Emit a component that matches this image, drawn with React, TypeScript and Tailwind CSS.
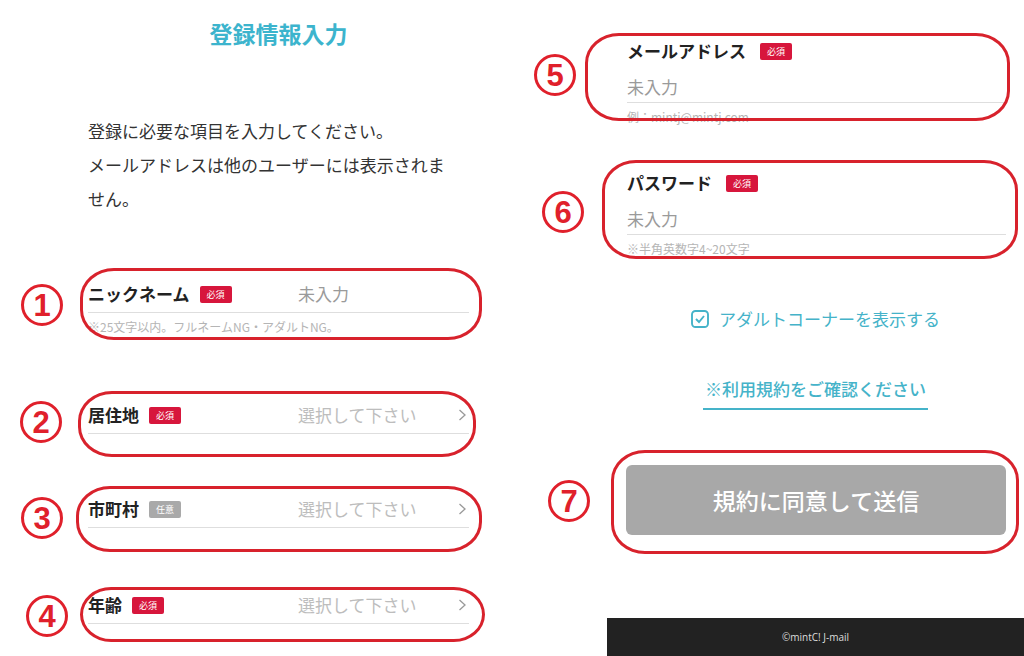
import React from 'react';

const JP = "font-['Noto_Sans_CJK_JP','Noto_Sans',sans-serif]";

const Badge: React.FC<{ label: string; gray?: boolean }> = ({ label, gray }) => (
  <span
    className={`inline-flex items-center justify-center w-[32px] h-[17px] rounded-[2px] text-[9px] leading-none text-white ${
      gray ? 'bg-[#a9a9a9]' : 'bg-[#d7163c]'
    }`}
  >
    {label}
  </span>
);

const Chevron = () => (
  <svg width="9" height="14" viewBox="0 0 9 14" className="ml-auto mr-[2px]">
    <polyline points="1.5,2 7,7 1.5,12" fill="none" stroke="#999" strokeWidth="1.3" />
  </svg>
);

// left screen: inline row (label + badge, value at fixed column)
const InlineRow: React.FC<{
  label: string;
  badge: string;
  gray?: boolean;
  value: string;
  select?: boolean;
  className?: string;
  hint?: string;
}> = ({ label, badge, gray, value, select, className, hint }) => (
  <div className={className}>
    <div className="flex items-center h-[24px]">
      <div className="flex items-center w-[210px] shrink-0">
        <span className="text-[17px] font-bold text-[#222] leading-[24px] mr-[10px]">{label}</span>
        <Badge label={badge} gray={gray} />
      </div>
      <span className={`text-[17px] leading-[24px] ${select ? 'text-[#bdbdbd]' : 'text-[#9a9a9a]'}`}>{value}</span>
      {select && <Chevron />}
    </div>
    <div className="h-[7px] border-b border-[#dedede]" />
    {hint && <p className="mt-[6px] text-[12px] leading-[16px] text-[#b5b5b5]">{hint}</p>}
  </div>
);

// right screen: stacked row (label on top, input below)
const StackRow: React.FC<{ label: string; hint: string; className?: string }> = ({ label, hint, className }) => (
  <div className={className}>
    <div className="flex items-center h-[24px]">
      <span className="text-[17px] font-bold text-[#222] leading-[24px] mr-[14px]">{label}</span>
      <Badge label="必須" />
    </div>
    <div className="mt-[12px] pb-[3px] border-b border-[#dedede]">
      <span className="text-[17px] leading-[24px] text-[#9a9a9a]">未入力</span>
    </div>
    <p className="mt-[6px] text-[12px] leading-[16px] text-[#b5b5b5]">{hint}</p>
  </div>
);

const marks = [
  { n: '1', c: 'left-[21px] top-[284px]' },
  { n: '2', c: 'left-[20px] top-[401px]' },
  { n: '3', c: 'left-[21px] top-[497px]' },
  { n: '4', c: 'left-[26px] top-[595px]' },
  { n: '5', c: 'left-[534px] top-[54px]' },
  { n: '6', c: 'left-[542px] top-[191px]' },
  { n: '7', c: 'left-[548px] top-[480px]' },
];

const rings = [
  'left-[80px] top-[268px] w-[402px] h-[72px]',
  'left-[78px] top-[391px] w-[398px] h-[66px]',
  'left-[76px] top-[486px] w-[406px] h-[66px]',
  'left-[80px] top-[587px] w-[405px] h-[55px]',
  'left-[585px] top-[33px] w-[425px] h-[88px]',
  'left-[602px] top-[160px] w-[416px] h-[99px]',
  'left-[611px] top-[450px] w-[408px] h-[104px]',
];

export default function App() {
  return (
    <div className={`relative w-[1024px] h-[656px] bg-white overflow-hidden flex ${JP}`}>
      {/* left screen */}
      <div className="w-[512px] h-full shrink-0">
        <div className="ml-[70px] w-[417px]">
          <h1 className="mt-[17px] h-[33px] text-center text-[23px] leading-[33px] font-bold text-[#3cb4cd]">
            登録情報入力
          </h1>
          <div className="px-[18px]">
            <p className="mt-[64px] text-[17px] leading-[34px] text-[#333]">
              <span className="block whitespace-nowrap">登録に必要な項目を入力してください。</span>
              <span className="block whitespace-nowrap">メールアドレスは他のユーザーには表示されま</span>
              <span className="block whitespace-nowrap">せん。</span>
            </p>
            <InlineRow
              className="mt-[66px]"
              label="ニックネーム"
              badge="必須"
              value="未入力"
              hint="※25文字以内。フルネームNG・アダルトNG。"
            />
            <InlineRow className="mt-[68px]" label="居住地" badge="必須" value="選択して下さい" select />
            <InlineRow className="mt-[63px]" label="市町村" badge="任意" gray value="選択して下さい" select />
            <InlineRow className="mt-[65px]" label="年齢" badge="必須" value="選択して下さい" select />
          </div>
        </div>
      </div>

      {/* right screen */}
      <div className="w-[512px] h-full shrink-0">
        <div className="ml-[95px] w-[417px] h-full flex flex-col">
          <div className="pl-[20px] pr-[18px]">
            <StackRow className="pt-[39px]" label="メールアドレス" hint="例：mintj@mintj.com" />
            <StackRow className="mt-[46px]" label="パスワード" hint="※半角英数字4~20文字" />
          </div>

          <div className="mt-[50px] flex items-center justify-center gap-[10px] text-[#45b3c9]">
            <svg width="18" height="18" viewBox="0 0 18 18">
              <rect x="1" y="1" width="16" height="16" rx="3.5" fill="none" stroke="#45b3c9" strokeWidth="1.9" />
              <polyline points="5,9 8,12 13,6" fill="none" stroke="#45b3c9" strokeWidth="1.9" />
            </svg>
            <span className="text-[17px] leading-[24px]">アダルトコーナーを表示する</span>
          </div>

          <div className="mt-[46px] self-center pb-[7px] border-b-2 border-[#45b3c9]">
            <span className="block text-[17px] leading-[24px] font-medium text-[#45b3c9] px-[2px]">
              ※利用規約をご確認ください
            </span>
          </div>

          <button className="mt-[55px] ml-[19px] mr-[18px] h-[70px] rounded-[6px] bg-[#a8a8a8] text-white text-[23px] font-medium">
            規約に同意して送信
          </button>

          <footer className="mt-auto h-[38px] bg-[#222] flex items-center justify-center">
            <span className="text-[10px] text-[#ddd] font-['Open_Sans','Noto_Sans',sans-serif]">©mintC! J-mail</span>
          </footer>
        </div>
      </div>

      {/* annotation layer */}
      {rings.map((c, i) => (
        <div key={i} className={`absolute ${c} border-[3px] border-[#d8222c] rounded-[34px/30px] pointer-events-none`} />
      ))}
      {marks.map(m => (
        <div
          key={m.n}
          className={`absolute ${m.c} w-[42px] h-[42px] rounded-full border-[3px] border-[#e0202b] flex items-center justify-center text-[#e0202b] text-[31px] font-bold font-['Liberation_Sans',sans-serif] leading-none`}
        >
          {m.n}
        </div>
      ))}
    </div>
  );
}
